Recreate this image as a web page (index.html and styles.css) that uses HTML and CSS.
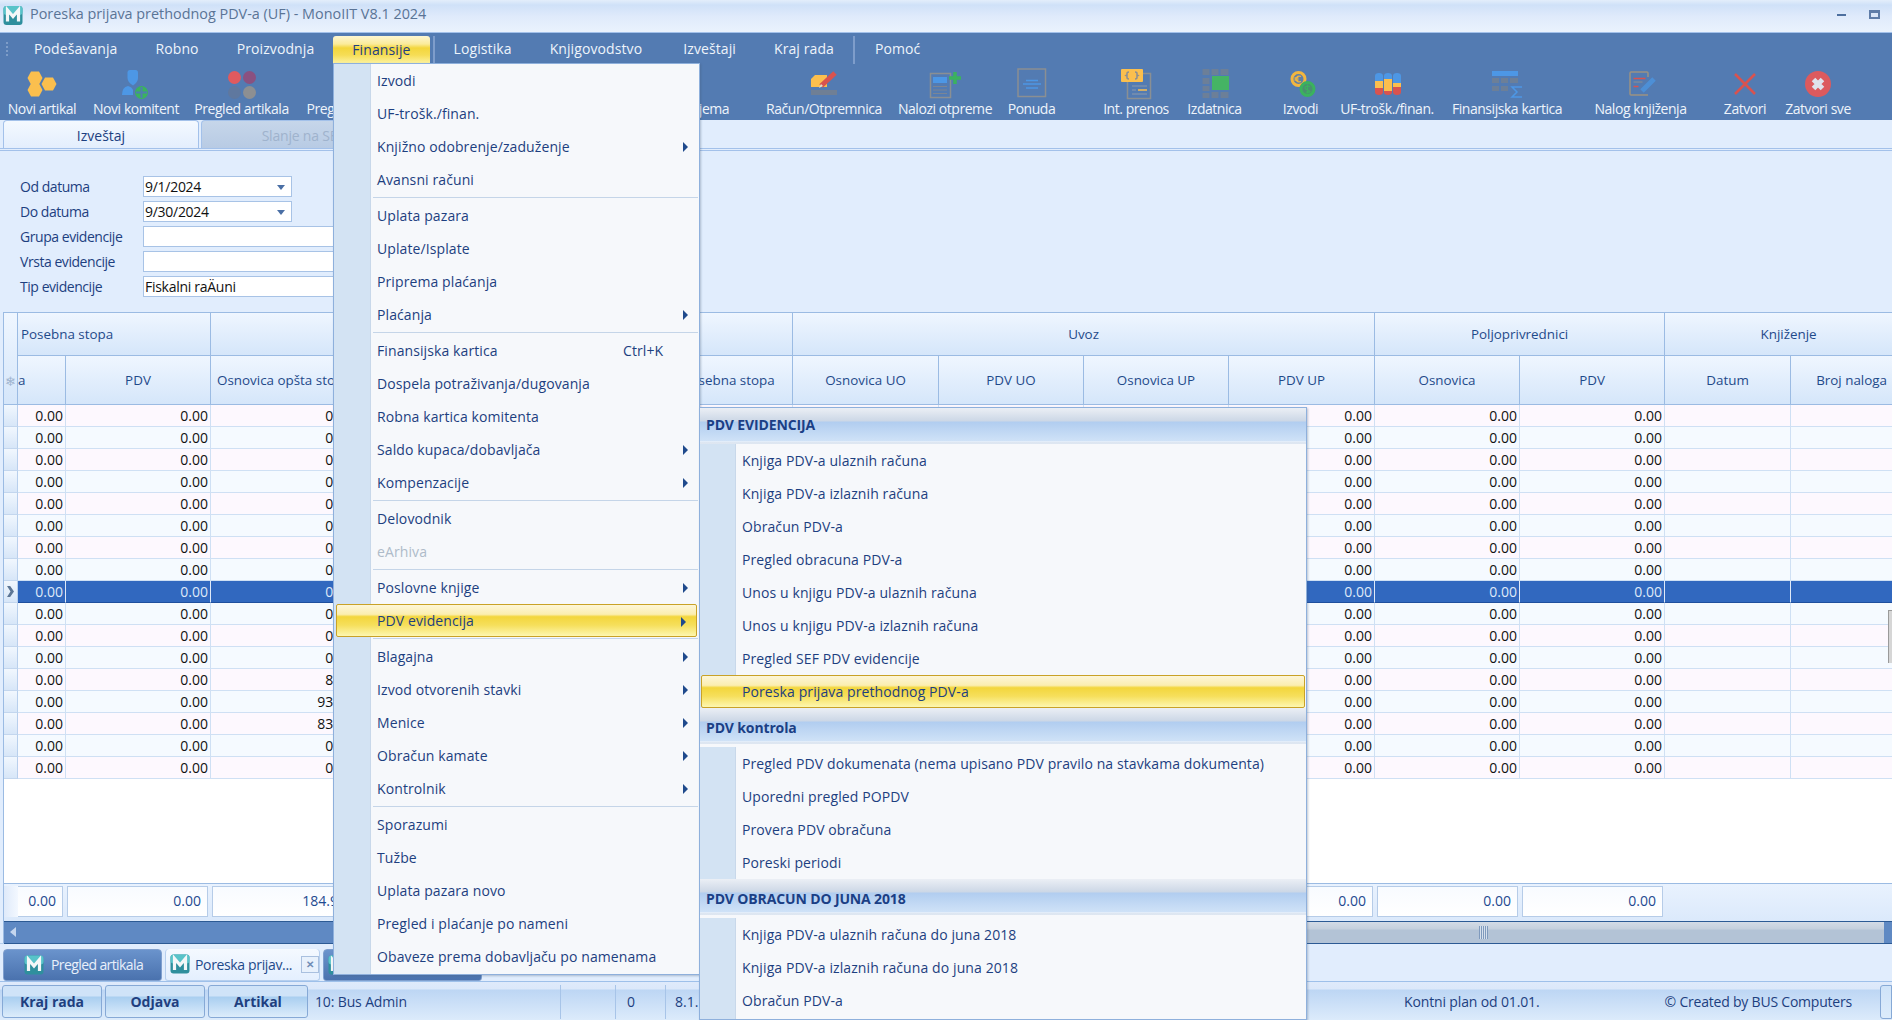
FILE: index.html
```html
<!DOCTYPE html>
<html lang="sr">
<head>
<meta charset="utf-8">
<title>Poreska prijava prethodnog PDV-a (UF) - MonoIIT V8.1 2024</title>
<link rel="stylesheet" href="styles.css">
</head>
<body>
<svg class="defs" width="0" height="0" aria-hidden="true">
  <symbol id="logo" viewBox="0 0 20 20">
    <rect x="0.5" y="0.5" width="19" height="19" rx="3" fill="#2f8f9d"/>
    <rect x="0.5" y="0.5" width="19" height="9" rx="3" fill="#58c3c9"/>
    <path d="M4.5 16V4.5L10 11l5.500-6.500V16" fill="none" stroke="#f4f7f8" stroke-width="3.200"/>
  </symbol>
</svg>
<div class="app">
  <header class="titlebar">
    <svg class="logo-title"><use href="#logo"/></svg>
    <span class="title-text">Poreska prijava prethodnog PDV-a (UF) - MonoIIT V8.1 2024</span>
    <span class="win-min"></span>
    <span class="win-restore"></span>
  </header>

  <section class="ribbon">
    <nav class="menubar">
      <span class="grip"></span>
      <span class="menu-item">Podešavanja</span>
      <span class="menu-item">Robno</span>
      <span class="menu-item">Proizvodnja</span>
      <span class="menu-item menu-active">Finansije</span>
      <span class="menu-sep"></span>
      <span class="menu-item">Logistika</span>
      <span class="menu-item menu-wide">Knjigovodstvo</span>
      <span class="menu-item">Izveštaji</span>
      <span class="menu-item">Kraj rada</span>
      <span class="menu-sep menu-sep-b"></span>
      <span class="menu-item">Pomoć</span>
    </nav>
    <div class="toolbar">
      <div class="tool">
        <svg class="ico" viewBox="0 0 36 32"><g fill="#fbbf4e"><path d="M7 3.500h8l3.500 6.500-3.500 6.500H7L3.500 10z"/><path d="M21 9.500h8l3.500 6.500-3.500 6.500h-8L17.500 16z"/><path d="M7 15.500h8l3.500 6.500-3.500 6.500H7L3.500 22z"/></g></svg>
        <span>Novi artikal</span>
      </div>
      <div class="tool">
        <svg class="ico" viewBox="0 0 36 32"><path d="M9.500 4.500Q9.500 2 12 2h5.500Q20 2 20 4.500V10q0 4-5 7.500Q9.500 14 9.500 10z" fill="#4d97e5"/><path d="M4 27q0-8 6-9 4 1 5 4v5z" fill="#4d97e5"/><circle cx="23.500" cy="24.500" r="6.500" fill="#3bb25e"/><path d="M23.500 19v11M18 24.500h11" stroke="#4f7db0" stroke-width="2"/></svg>
        <span>Novi komitent</span>
      </div>
      <div class="tool">
        <svg class="ico" viewBox="0 0 36 32"><circle cx="10.500" cy="9.500" r="6.500" fill="#e05a5e"/><circle cx="25.500" cy="9.500" r="6.500" fill="#8a5180"/><circle cx="10.500" cy="24.500" r="6.500" fill="#5f789f"/><circle cx="25.500" cy="24.500" r="6.500" fill="#8d8f92"/></svg>
        <span>Pregled artikala</span>
      </div>
      <div class="tool">
        <svg class="ico" viewBox="0 0 36 32"><rect x="5" y="3" width="26" height="26" fill="none" stroke="#8a8f93" stroke-width="2"/></svg>
        <span>Pregled prometa</span>
      </div>
      <div class="tool-gap tg-1"></div>
      <div class="tool">
        <svg class="ico" viewBox="0 0 36 32"><rect x="5" y="3" width="26" height="26" fill="none" stroke="#8a8f93" stroke-width="2"/></svg>
        <span>Pregled prijema</span>
      </div>
      <div class="tool-gap tg-2"></div>
      <div class="tool">
        <svg class="ico" viewBox="0 0 36 32"><path d="M9 7h12v12H5v-8z" fill="#fbbf4e"/><rect x="5" y="22" width="26" height="5" fill="#6f7f95"/><path d="M15 18l14-13" stroke="#d9534f" stroke-width="5"/><path d="M13 20l2-4 2 2z" fill="#e6e0c8"/></svg>
        <span>Račun/Otpremnica</span>
      </div>
      <div class="tool-gap tg-3"></div>
      <div class="tool">
        <svg class="ico" viewBox="0 0 36 32"><rect x="3.500" y="5.500" width="20" height="24" fill="none" stroke="#8a8f93" stroke-width="1.500"/><rect x="6" y="9" width="14" height="6" fill="#4d97e5"/><path d="M6 18.500h14M6 22h14M6 25.500h14" stroke="#7a8595"/><path d="M28 4v12M22 10h12" stroke="#3bb25e" stroke-width="3.500"/></svg>
        <span>Nalozi otpreme</span>
      </div>
      <div class="tool">
        <svg class="ico" viewBox="0 0 36 32"><rect x="4" y="1" width="27.500" height="27.500" fill="none" stroke="#8a8f93" stroke-width="1.500"/><path d="M12 12.500h12M9 16h18M12 20h12" stroke="#4d97e5" stroke-width="1.500"/></svg>
        <span>Ponuda</span>
      </div>
      <div class="tool-gap tg-4"></div>
      <div class="tool">
        <svg class="ico" viewBox="0 0 36 32"><rect x="9.500" y="5.500" width="23" height="25" fill="#537bb2" stroke="#8a8f93" stroke-width="1.500"/><rect x="3" y="1" width="22" height="13" rx="1" fill="#fbbf4e"/><path d="M11 4q-2 0-2 1.500v1.500l-1 .5 1 .5v1.500Q9 11 11 11M17 4q2 0 2 1.500v1.500l1 .5-1 .5v1.500Q19 11 17 11" fill="none" stroke="#8d8f92" stroke-width="1.500"/><path d="M14 18h15M14 22h4M14 26h15" stroke="#8d9aac"/><path d="M20 22h9" stroke="#fbbf4e" stroke-width="1.500"/></svg>
        <span>Int. prenos</span>
      </div>
      <div class="tool">
        <svg class="ico" viewBox="0 0 36 32"><path d="M5.500 1h7v6h-7zM14.500 1h7v6h-7zM23.500 1h8v6h-8zM5.500 10h7v6h-7zM5.500 18h7v5h-7zM5.500 25h7v5h-7zM14.500 24h7v6h-7zM23.500 24h8v6h-8z" fill="#6c7f98"/><rect x="15" y="8" width="17" height="14" fill="#45b464"/></svg>
        <span>Izdatnica</span>
      </div>
      <div class="tool-gap tg-5"></div>
      <div class="tool">
        <svg class="ico" viewBox="0 0 36 32"><circle cx="15.500" cy="11" r="6.500" fill="#5f7fa8" stroke="#f2b63f" stroke-width="3"/><path d="M18 8.500q-4-1.500-5 2.500 1 4 5 2.500M11.500 10h4M11.500 12h4" fill="none" stroke="#f2b63f" stroke-width="1.300"/><circle cx="24.500" cy="21" r="6.500" fill="#4a8f70" stroke="#3bb25e" stroke-width="3"/><path d="M27 18.500q-2-1-4 0t0 2.500 4 2.500q-1 1.500-4 .5M24.500 16.500v9" fill="none" stroke="#3bb25e" stroke-width="1.200"/></svg>
        <span>Izvodi</span>
      </div>
      <div class="tool">
        <svg class="ico" viewBox="0 0 36 32"><g><path d="M6 8q0-3 4-3t4 3v5H6z" fill="#4d97e5"/><path d="M6 13h8v7H6z" fill="#fbbf4e"/><path d="M6 20h8v4q0 3-4 3t-4-3z" fill="#d9534f"/><path d="M15 8q0-3 4-3t4 3v3h-8z" fill="#4d97e5"/><path d="M15 11h8v12h-8z" fill="#fbbf4e"/><path d="M15 23h8v1q0 3-4 3t-4-3z" fill="#d9534f"/><path d="M24 8q0-3 4-3t4 3v7h-8z" fill="#4d97e5"/><path d="M24 15h8v4h-8z" fill="#fbbf4e"/><path d="M24 19h8v5q0 3-4 3t-4-3z" fill="#d9534f"/></g></svg>
        <span>UF-trošk./finan.</span>
      </div>
      <div class="tool">
        <svg class="ico" viewBox="0 0 36 32"><rect x="3" y="3" width="26" height="5" fill="#4d97e5"/><path d="M3 10h7v5H3zM12 10h7v5h-7zM21 10h8v5h-8zM3 18h7v5H3zM12 18h7v5h-7z" fill="#6c7f98"/><path d="M33 19H23l5 5-5 5h10" fill="none" stroke="#4d97e5" stroke-width="1.500"/></svg>
        <span>Finansijska kartica</span>
      </div>
      <div class="tool">
        <svg class="ico" viewBox="0 0 36 32"><path d="M25 9V5q0-1-1-1H8Q7 4 7 5v21q0 1 1 1h17" fill="none" stroke="#9c9282" stroke-width="1.500"/><path d="M10.500 10.500h12" stroke="#d9534f" stroke-width="1.500"/><path d="M10.500 14h9" stroke="#8d8f92" stroke-width="1"/><path d="M10.500 18.500h5" stroke="#d9534f" stroke-width="1.500"/><path d="M19 23l12-12" stroke="#4d8fd6" stroke-width="5"/></svg>
        <span>Nalog knjiženja</span>
      </div>
      <div class="tool">
        <svg class="ico" viewBox="0 0 36 32"><path d="M8 6l20 20M28 6L8 26" stroke="#d9534f" stroke-width="2.500"/></svg>
        <span>Zatvori</span>
      </div>
      <div class="tool">
        <svg class="ico" viewBox="0 0 36 32"><circle cx="18" cy="16" r="13" fill="#dc5a5e"/><path d="M13.500 11.500l9 9M22.500 11.500l-9 9" stroke="#dfe3ec" stroke-width="5"/></svg>
        <span>Zatvori sve</span>
      </div>
    </div>
  </section>

  <div class="tabstrip">
    <div class="tab tab-on">Izveštaj</div>
    <div class="tab tab-off">Slanje na SEF</div>
  </div>

  <section class="filter">
    <div class="f-row"><label>Od datuma</label><div class="f-input f-date">9/1/2024<i class="caret"></i></div></div>
    <div class="f-row"><label>Do datuma</label><div class="f-input f-date">9/30/2024<i class="caret"></i></div></div>
    <div class="f-row"><label>Grupa evidencije</label><div class="f-input"></div></div>
    <div class="f-row"><label>Vrsta evidencije</label><div class="f-input"></div></div>
    <div class="f-row"><label>Tip evidencije</label><div class="f-input">Fiskalni raÄuni</div></div>
  </section>

  <section class="grid">
    <div class="grid-body">
      <table class="tbl">
        <colgroup>
          <col class="c14"><col class="c48"><col class="c145"><col class="c145"><col class="c145"><col class="c146"><col class="c146"><col class="c146"><col class="c145"><col class="c145"><col class="c146"><col class="c145"><col class="c145"><col class="c126"><col class="c122">
        </colgroup>
        <thead>
          <tr class="h1">
            <th rowspan="2" class="corner"><i class="star">❄</i></th>
            <th colspan="2" class="left">Posebna stopa</th>
            <th colspan="2"></th>
            <th colspan="2"></th>
            <th colspan="4">Uvoz</th>
            <th colspan="2">Poljoprivrednici</th>
            <th colspan="2">Knjiženje</th>
          </tr>
          <tr class="h2">
            <th class="clipped">a</th><th>PDV</th><th class="nowrap">Osnovica opšta stopa</th><th></th><th></th><th class="nudge">Osn. posebna stopa</th>
            <th>Osnovica UO</th><th>PDV UO</th><th>Osnovica UP</th><th>PDV UP</th><th>Osnovica</th><th>PDV</th><th>Datum</th><th>Broj naloga</th>
          </tr>
        </thead>
        <tbody>
          <tr class="pink"><th></th><td>0.00</td><td>0.00</td><td>0.00</td><td></td><td></td><td></td><td></td><td></td><td></td><td>0.00</td><td>0.00</td><td>0.00</td><td></td><td></td></tr>
          <tr><th></th><td>0.00</td><td>0.00</td><td>0.00</td><td></td><td></td><td></td><td></td><td></td><td></td><td>0.00</td><td>0.00</td><td>0.00</td><td></td><td></td></tr>
          <tr class="pink"><th></th><td>0.00</td><td>0.00</td><td>0.00</td><td></td><td></td><td></td><td></td><td></td><td></td><td>0.00</td><td>0.00</td><td>0.00</td><td></td><td></td></tr>
          <tr><th></th><td>0.00</td><td>0.00</td><td>0.00</td><td></td><td></td><td></td><td></td><td></td><td></td><td>0.00</td><td>0.00</td><td>0.00</td><td></td><td></td></tr>
          <tr class="pink"><th></th><td>0.00</td><td>0.00</td><td>0.00</td><td></td><td></td><td></td><td></td><td></td><td></td><td>0.00</td><td>0.00</td><td>0.00</td><td></td><td></td></tr>
          <tr><th></th><td>0.00</td><td>0.00</td><td>0.00</td><td></td><td></td><td></td><td></td><td></td><td></td><td>0.00</td><td>0.00</td><td>0.00</td><td></td><td></td></tr>
          <tr class="pink"><th></th><td>0.00</td><td>0.00</td><td>0.00</td><td></td><td></td><td></td><td></td><td></td><td></td><td>0.00</td><td>0.00</td><td>0.00</td><td></td><td></td></tr>
          <tr><th></th><td>0.00</td><td>0.00</td><td>0.00</td><td></td><td></td><td></td><td></td><td></td><td></td><td>0.00</td><td>0.00</td><td>0.00</td><td></td><td></td></tr>
          <tr class="sel"><th><i class="cursor"></i></th><td>0.00</td><td>0.00</td><td>0.00</td><td></td><td></td><td></td><td></td><td></td><td></td><td>0.00</td><td>0.00</td><td>0.00</td><td></td><td></td></tr>
          <tr><th></th><td>0.00</td><td>0.00</td><td>0.00</td><td></td><td></td><td></td><td></td><td></td><td></td><td>0.00</td><td>0.00</td><td>0.00</td><td></td><td></td></tr>
          <tr class="pink"><th></th><td>0.00</td><td>0.00</td><td>0.00</td><td></td><td></td><td></td><td></td><td></td><td></td><td>0.00</td><td>0.00</td><td>0.00</td><td></td><td></td></tr>
          <tr><th></th><td>0.00</td><td>0.00</td><td>0.00</td><td></td><td></td><td></td><td></td><td></td><td></td><td>0.00</td><td>0.00</td><td>0.00</td><td></td><td></td></tr>
          <tr class="pink"><th></th><td>0.00</td><td>0.00</td><td>8.33</td><td></td><td></td><td></td><td></td><td></td><td></td><td>0.00</td><td>0.00</td><td>0.00</td><td></td><td></td></tr>
          <tr><th></th><td>0.00</td><td>0.00</td><td>93.33</td><td></td><td></td><td></td><td></td><td></td><td></td><td>0.00</td><td>0.00</td><td>0.00</td><td></td><td></td></tr>
          <tr class="pink"><th></th><td>0.00</td><td>0.00</td><td>83.33</td><td></td><td></td><td></td><td></td><td></td><td></td><td>0.00</td><td>0.00</td><td>0.00</td><td></td><td></td></tr>
          <tr><th></th><td>0.00</td><td>0.00</td><td>0.00</td><td></td><td></td><td></td><td></td><td></td><td></td><td>0.00</td><td>0.00</td><td>0.00</td><td></td><td></td></tr>
          <tr class="pink"><th></th><td>0.00</td><td>0.00</td><td>0.00</td><td></td><td></td><td></td><td></td><td></td><td></td><td>0.00</td><td>0.00</td><td>0.00</td><td></td><td></td></tr>
        </tbody>
      </table>
    </div>
    <div class="sums">
      <div class="sum-sel"></div>
      <div class="sum sum-first">0.00</div>
      <div class="sum">0.00</div>
      <div class="sum">184.99</div>
      <div class="sum"></div>
      <div class="sum"></div>
      <div class="sum"></div>
      <div class="sum sum-wide"></div>
      <div class="sum"></div>
      <div class="sum"></div>
      <div class="sum">0.00</div>
      <div class="sum">0.00</div>
      <div class="sum">0.00</div>
    </div>
    <div class="hscroll">
      <i class="arrow-left"></i>
      <div class="thumb"><i class="thumb-grip"></i></div>
    </div>
  </section>

  <section class="tasks">
    <div class="task task-blue"><svg class="logo-task"><use href="#logo"/></svg><span class="task-plain">Pregled artikala</span></div>
    <div class="task task-on"><svg class="logo-task"><use href="#logo"/></svg><span class="task-label">Poreska prijav...</span><i class="task-x">✕</i></div>
    <div class="task task-blue task-third"><svg class="logo-task"><use href="#logo"/></svg></div>
  </section>

  <footer class="status">
    <button class="st-btn">Kraj rada</button>
    <button class="st-btn">Odjava</button>
    <button class="st-btn">Artikal</button>
    <span class="st st-user">10: Bus Admin</span>
    <span class="st st-blank"></span>
    <span class="st st-num">0</span>
    <span class="st st-ver">8.1.</span>
    <span class="st st-plan">Kontni plan od 01.01.</span>
    <span class="st st-copy">© Created by BUS Computers</span>
    <span class="st-corner"></span>
  </footer>

  <i class="edge-tab"></i>

  <div class="drop drop-main">
    <div class="mi">Izvodi</div>
    <div class="mi">UF-trošk./finan.</div>
    <div class="mi mi-sub">Knjižno odobrenje/zaduženje</div>
    <div class="mi">Avansni računi</div>
    <div class="msep"></div>
    <div class="mi">Uplata pazara</div>
    <div class="mi">Uplate/Isplate</div>
    <div class="mi">Priprema plaćanja</div>
    <div class="mi mi-sub">Plaćanja</div>
    <div class="msep"></div>
    <div class="mi">Finansijska kartica<span class="shortcut">Ctrl+K</span></div>
    <div class="mi">Dospela potraživanja/dugovanja</div>
    <div class="mi">Robna kartica komitenta</div>
    <div class="mi mi-sub">Saldo kupaca/dobavljača</div>
    <div class="mi mi-sub">Kompenzacije</div>
    <div class="msep"></div>
    <div class="mi">Delovodnik</div>
    <div class="mi mi-dis">eArhiva</div>
    <div class="msep"></div>
    <div class="mi mi-sub">Poslovne knjige</div>
    <div class="mi mi-sub mi-hot">PDV evidencija</div>
    <div class="msep"></div>
    <div class="mi mi-sub">Blagajna</div>
    <div class="mi mi-sub">Izvod otvorenih stavki</div>
    <div class="mi mi-sub">Menice</div>
    <div class="mi mi-sub">Obračun kamate</div>
    <div class="mi mi-sub">Kontrolnik</div>
    <div class="msep"></div>
    <div class="mi">Sporazumi</div>
    <div class="mi">Tužbe</div>
    <div class="mi">Uplata pazara novo</div>
    <div class="mi">Pregled i plaćanje po nameni</div>
    <div class="mi">Obaveze prema dobavljaču po namenama</div>
  </div>

  <div class="drop drop-sub">
    <div class="sh sh-a">PDV EVIDENCIJA</div>
    <div class="mi">Knjiga PDV-a ulaznih računa</div>
    <div class="mi">Knjiga PDV-a izlaznih računa</div>
    <div class="mi">Obračun PDV-a</div>
    <div class="mi">Pregled obracuna PDV-a</div>
    <div class="mi">Unos u knjigu PDV-a ulaznih računa</div>
    <div class="mi">Unos u knjigu PDV-a izlaznih računa</div>
    <div class="mi">Pregled SEF PDV evidencije</div>
    <div class="mi mi-hot">Poreska prijava prethodnog PDV-a</div>
    <div class="sh sh-b">PDV kontrola</div>
    <div class="mi">Pregled PDV dokumenata (nema upisano PDV pravilo na stavkama dokumenta)</div>
    <div class="mi">Uporedni pregled POPDV</div>
    <div class="mi">Provera PDV obračuna</div>
    <div class="mi">Poreski periodi</div>
    <div class="sh sh-c">PDV OBRACUN DO JUNA 2018</div>
    <div class="mi">Knjiga PDV-a ulaznih računa do juna 2018</div>
    <div class="mi">Knjiga PDV-a izlaznih računa do juna 2018</div>
    <div class="mi">Obračun PDV-a</div>
  </div>
</div>
</body>
</html>
```
FILE: styles.css
```css
* { box-sizing: border-box; }
html, body { margin: 0; padding: 0; }
body { width: 1892px; height: 1020px; overflow: hidden; font-family: "Open Sans", "Noto Sans", sans-serif; font-size: 14px; color: #1d3f80; }
.defs { position: absolute; }
.app { position: relative; width: 1892px; height: 1020px; display: flex; flex-direction: column; background: #e1edfd; overflow: hidden; }

/* title bar */
.titlebar { height: 33px; flex: none; display: flex; align-items: center; padding: 0 0 3px 3px; background: linear-gradient(#e3eefb 0, #cfe1f8 5px, #dfeafb 16px, #eaf2fd 100%); border-bottom: 1px solid #a3c1ea; }
.logo-title { width: 20px; height: 21px; margin-top: 2px; }
.title-text { margin-left: 7px; color: #5a7496; font-size: 14.400px; margin-bottom: 2px; }
.win-min { margin-left: auto; width: 9px; height: 2px; background: #4d6f9f; }
.win-restore { margin: 0 12px 0 23px; width: 11px; height: 9px; border: 2px solid #5f7da8; border-top-width: 3px; background: #dbe7f8; }

/* ribbon */
.ribbon { height: 87px; flex: none; background: #537bb2; display: flex; flex-direction: column; color: #eef4fb; }
.menubar { height: 31px; flex: none; display: flex; align-items: center; padding-left: 6px; position: relative; }
.grip { width: 2px; height: 14px; margin-right: 7px; border-left: 2px dotted #7e9dc8; }
.menu-item { padding: 0 19px; white-space: nowrap; line-height: 29px; letter-spacing: .1px; }
.menu-wide { padding-right: 22px; }
.menu-active { height: 28px; line-height: 27px; margin-top: 3px; padding: 0 19px; color: #1f3f80; border-radius: 3px 3px 0 0; background: linear-gradient(#fdf6d2 0, #fbeb9a 8px, #f3d63c 12px, #f6dd55 19px, #fdf4a6 100%); }
.menu-sep { width: 2px; height: 28px; margin: 3px 0 0 3px; background: #7e9dcb; flex: none; }
.menu-sep-b { margin-left: 0; margin-right: 1px; }
.toolbar { display: flex; height: 56px; align-items: flex-start; }
.tool { display: flex; flex-direction: column; align-items: center; flex: none; white-space: nowrap; letter-spacing: -.45px; }
.tool span { line-height: 19px; margin-top: -1px; }
.ico { width: 36px; height: 32px; display: block; margin-top: 4px; }
.tool:nth-child(1) { width: 84px; }
.tool:nth-child(2) { width: 104px; }
.tool:nth-child(3) { width: 107px; }
.tool:nth-child(4) { width: 126px; }
.tool:nth-child(6) { width: 120px; }
.tool:nth-child(8) { width: 116px; }
.tool:nth-child(10) { width: 108px; }
.tool:nth-child(11) { width: 65px; }
.tool:nth-child(13) { width: 80px; }
.tool:nth-child(14) { width: 77px; }
.tool:nth-child(16) { width: 61px; }
.tool:nth-child(17) { width: 112px; }
.tool:nth-child(18) { width: 128px; }
.tool:nth-child(19) { width: 139px; }
.tool:nth-child(20) { width: 70px; }
.tool:nth-child(21) { width: 76px; }
.tool-gap { flex: none; }
.tg-1 { width: 200px; }
.tg-2 { width: 25px; }
.tg-3 { width: 9px; }
.tg-4 { width: 32px; }
.tg-5 { width: 17px; }

/* tabs */
.tabstrip { height: 31px; flex: none; display: flex; padding-left: 3px; gap: 2px; align-items: flex-start; border-bottom: 3px double #a3c1ea; }
.tab { height: 28px; line-height: 29px; text-align: center; width: 196px; border-radius: 4px 4px 0 0; border: 1px solid #a3c1ea; border-bottom: 0; }
.tab-on { background: linear-gradient(#f4f9ff, #e3eefd); }
.tab-off { color: #9fb3cd; background: linear-gradient(#c6d6ea 0, #b8cbe4 100%); width: 204px; letter-spacing: -.2px; }

/* filter */
.filter { height: 161px; flex: none; padding: 25px 0 0 20px; display: flex; flex-direction: column; gap: 4px; }
.f-row { display: flex; align-items: center; height: 21px; }
.f-row label { width: 123px; flex: none; letter-spacing: -.45px; }
.f-input { position: relative; width: 300px; height: 21px; background: #fff; border: 1px solid #a8c3e6; color: #111; line-height: 19px; padding-left: 1px; letter-spacing: -0.02em; }
.f-date { width: 149px; }
.caret { position: absolute; right: 6px; top: 8px; border: 4px solid transparent; border-top: 5px solid #4a6fa5; border-bottom: 0; }

/* grid */
.grid { height: 631px; flex: none; margin-left: 3px; display: flex; flex-direction: column; border-left: 1px solid #9bbbe3; border-top: 1px solid #9bbbe3; background: #fff; }
.grid-body { height: 571px; flex: none; overflow: hidden; border-bottom: 1px solid #9bbbe3; }
.tbl { table-layout: fixed; width: 1909px; border-collapse: separate; border-spacing: 0; }
.c14 { width: 14px; } .c48 { width: 48px; } .c145 { width: 145px; } .c146 { width: 146px; } .c126 { width: 126px; } .c122 { width: 122px; }
.tbl thead th { font-weight: 400; color: #1f4a8a; text-align: center; white-space: nowrap; overflow: hidden; background: linear-gradient(#eff6ff, #d5e6fa); border-right: 1px solid #9bbbe3; border-bottom: 1px solid #9bbbe3; padding: 0 4px; font-size: 13.400px; }
.h1 th { height: 43px; }
.h2 th { height: 49px; }
.tbl thead .left { text-align: left; padding-left: 3px; }
.tbl thead .clipped { text-align: left; padding: 0; }
.tbl thead .nowrap { text-align: left; padding-left: 6px; }
.tbl thead .nudge { padding: 0 14px 0 0; }
.tbl thead .corner { padding: 0; vertical-align: bottom; padding-bottom: 14px; }
.star { font-style: normal; color: #9fb4cf; font-size: 13px; }
.tbl tbody tr { height: 22px; }
.tbl tbody th { padding: 0; background: linear-gradient(#f1f7fe, #d7e6f8); border-right: 1px solid #b8cfec; border-bottom: 1px solid #c3d6ee; position: relative; }
.tbl tbody td { height: 22px; padding: 0 2px 0 0; text-align: right; color: #111; background: #f5faff; border-right: 1px solid #cfe0f4; border-bottom: 1px solid #cfe0f4; line-height: 20px; overflow: hidden; white-space: nowrap; }
.tbl tbody .pink td { background: #fdf8fe; }
.tbl tbody .sel td { background: #3168bf; color: #dfe9f8; border-right-color: #dfe9f8; border-bottom-color: #1f4f9e; border-top: 0; }
.cursor { position: absolute; left: 3px; top: 5px; width: 7px; height: 11px; background: #5d7695; clip-path: polygon(0 0, 45% 0, 100% 50%, 45% 100%, 0 100%, 50% 50%); }

.sums { height: 37px; flex: none; display: flex; gap: 4px; padding-top: 2px; background: linear-gradient(#e9f2fe, #dbe9fb); align-items: flex-start; }
.sum-sel { width: 14px; height: 31px; background: linear-gradient(90deg, #dfeafa, #f3f8ff); }
.sum { width: 141px; height: 31px; flex: none; background: linear-gradient(#f8fbff, #fff); border: 1px solid #b6cce8; text-align: right; padding-right: 6px; line-height: 28px; color: #1f4a90; }
.sum-first { width: 45px; margin-left: -4px; border-left: 0; }
.sum-wide { width: 146px; }
.hscroll { height: 23px; flex: none; position: relative; border-top: 1px solid #2c5a94; border-bottom: 1px solid #2c5a94; background: #5f89c3; }
.arrow-left { position: absolute; left: 6px; top: 5px; border: 5px solid transparent; border-right: 6px solid #c5d6ee; border-left: 0; }
.thumb { position: absolute; left: 996px; right: 8px; top: 0; bottom: 0; background: linear-gradient(#d3dbe6 0, #c4cfdd 7px, #b3c3d6 8px, #b3c3d6 100%); }
.thumb-grip { position: absolute; left: 479px; top: 4px; width: 9px; height: 13px; background: repeating-linear-gradient(90deg, #7f9abd 0 1px, #d6e0ec 1px 2px); }

/* task strip */
.tasks { height: 39px; flex: none; display: flex; gap: 3px; padding: 5px 0 0 3px; margin-top: 0; align-items: flex-start; border-bottom: 1px solid #9ec0ea; border-top: 1px solid #b6cfee; }
.task { height: 32px; width: 159px; display: flex; align-items: center; padding-left: 20px; padding-bottom: 1px; border-radius: 4px 4px 3px 3px; white-space: nowrap; }
.task-blue { color: #e8f0fb; background: linear-gradient(#6a93cc, #4a72ae); border: 1px solid #7f9fce; }
.task-third { padding-left: 4px; }
.task-plain { letter-spacing: -.6px; }
.task-on { width: 155px; padding-left: 4px; background: linear-gradient(#f4f9ff, #e4effe); border: 1px solid #b6cfee; border-top: 0; color: #1f4a8a; }
.logo-task { width: 20px; height: 20px; margin-right: 7px; flex: none; }
.task-on .logo-task { margin-right: 5px; }
.task-label { width: 106px; overflow: hidden; letter-spacing: -.35px; }
.task-x { width: 18px; height: 17px; font-style: normal; font-weight: 700; font-size: 10px; line-height: 15px; text-align: center; color: #6f8cb6; border: 1px solid #a9c0df; background: #e8f1fc; flex: none; }

/* status */
.status { height: 38px; flex: none; position: relative; display: flex; align-items: flex-start; padding: 3px 0 0 2px; gap: 3px; background: linear-gradient(#dfeafb 0, #dbe8fa 7px, #bdd6f4 8px, #dcebfb 100%); }
.st-btn { width: 100px; height: 33px; padding: 0; font: 700 14px "Open Sans", "Noto Sans", sans-serif; color: #1f3f7f; border: 1px solid #86a9d6; border-radius: 3px; background: linear-gradient(#cfe3f8 0, #cfe3f8 10px, #a9cef0 11px, #dcecfb 100%); }
.st { line-height: 33px; white-space: nowrap; height: 34px; border-right: 1px solid #a7c4e8; }
.st-user { margin-left: 4px; width: 246px; letter-spacing: -0.01em; }
.st-blank { width: 52px; }
.st-num { width: 47px; padding-left: 8px; }
.st-ver { width: 50px; padding-left: 6px; }
.st-plan { margin-left: 682px; letter-spacing: -0.01em; border-right: 0; }
.st-copy { margin-left: auto; margin-right: 40px; letter-spacing: -0.015em; border-right: 0; }
.st-corner { position: absolute; right: 0; top: 3px; width: 12px; height: 34px; border: 1px solid #86a9d6; border-radius: 3px 0 0 3px; background: linear-gradient(#cfe3f8, #dcecfb); }

.edge-tab { position: absolute; left: 1888px; top: 610px; width: 4px; height: 53px; background: #d6d6d6; border-left: 1px solid #9a9a9a; border-top: 1px solid #9a9a9a; }

/* dropdowns */
.drop { position: absolute; background: linear-gradient(90deg, #d3e3f3 0 36px, #c8d8ea 36px 37px, #f6f8fb 37px); border: 1px solid #8eb0dc; box-shadow: 1px 1px 2px rgba(70,90,120,.35); }
.drop-main { left: 333px; top: 63px; width: 367px; height: 912px; padding: 0 1px; }
.drop-sub { left: 699px; top: 407px; width: 608px; height: 613px; background: linear-gradient(90deg, #d3e3f3 0 35px, #c8d8ea 35px 36px, #f6f8fb 36px); }
.mi { position: relative; height: 33px; line-height: 33px; padding-left: 42px; white-space: nowrap; color: #1d3f80; letter-spacing: .1px; }
.mi-dis { color: #aebbc9; }
.mi-sub::after { content: ""; position: absolute; right: 10px; top: 12px; border: 5px solid transparent; border-left: 5px solid #1f4a8c; border-right: 0; }
.mi-hot { border: 1px solid #c9a227; border-radius: 2px; line-height: 31px; background: linear-gradient(#fdf6d8 0, #fbeeb0 30%, #f3d63c 38%, #f6df5c 65%, #fdf7b0 100%); }
.drop-main .mi-hot { margin: 0 1px; padding-left: 40px; }
.drop-sub .mi { padding-left: 42px; }
.drop-sub .mi-hot { margin: 0 1px; padding-left: 40px; }
.msep { height: 3px; margin-left: 38px; background: linear-gradient(transparent 1px, #c5d5e8 1px, #c5d5e8 2px, transparent 2px); }
.shortcut { position: absolute; left: 288px; }
.sh { padding-left: 6px; line-height: 20px; font-weight: 700; color: #1b3f85; letter-spacing: -0.01em; background: linear-gradient(#ebeff5 0, #ccd7e6 13px, #b1cdf0 14px, #cfe2f7 33px, #f6f8fb 34px, #c5d5e8 35px, #f6f8fb 36px); }
.sh-a { height: 36px; padding-top: 7px; }
.sh-b { height: 39px; padding-top: 10px; }
.sh-c { height: 39px; padding-top: 10px; }
```
